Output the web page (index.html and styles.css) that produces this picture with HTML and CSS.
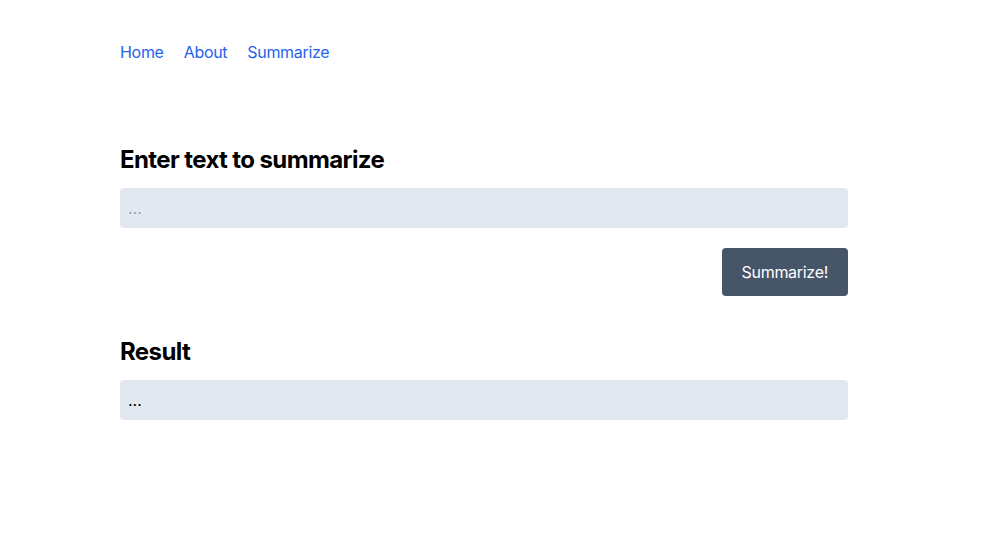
FILE: index.html
```html
<!DOCTYPE html>
<html>
<head>
<meta charset="utf-8">
<link rel="stylesheet" href="styles.css">
</head>
<body>
<div class="page">
  <nav class="nav">
    <a href="#">Home</a>
    <a href="#">About</a>
    <a href="#">Summarize</a>
  </nav>
  <main class="main">
    <h2 class="title">Enter text to summarize</h2>
    <input class="field" type="text" placeholder="...">
    <div class="actions">
      <button class="btn">Summarize!</button>
    </div>
    <h2 class="title result-title">Result</h2>
    <div class="field result">...</div>
  </main>
</div>
</body>
</html>
```
FILE: styles.css
```css
* { box-sizing: border-box; }
body {
  margin: 0;
  font-family: Inter, "Noto Sans", sans-serif;
  background: #fff;
  color: #000;
}
.page {
  width: 728px;
  margin-left: 120px;
  padding-top: 40px;
}
.nav {
  display: flex;
  gap: 20px;
  font-size: 16px;
  line-height: 24px;
  letter-spacing: -0.3px;
}
.nav a {
  color: #2563eb;
  text-decoration: none;
}
.main {
  margin-top: 80px;
  display: flex;
  flex-direction: column;
}
.title {
  margin: 0;
  font-size: 24px;
  line-height: 32px;
  font-weight: 700;
  letter-spacing: -0.6px;
}
.field {
  margin-top: 12px;
  height: 40px;
  width: 100%;
  background: #e2e8f0;
  border: none;
  border-radius: 4px;
  padding: 0 8px;
  font-family: inherit;
  font-size: 16px;
  color: #000;
  outline: none;
}
.field::placeholder { color: #94a3b8; }
.result {
  display: flex;
  align-items: center;
}
.actions {
  margin-top: 20px;
  display: flex;
  justify-content: flex-end;
}
.btn {
  height: 48px;
  padding: 0 20px;
  background: #475569;
  color: #fff;
  border: none;
  border-radius: 4px;
  font-family: inherit;
  font-size: 16px;
  letter-spacing: -0.3px;
}
.result-title { margin-top: 40px; }
```
